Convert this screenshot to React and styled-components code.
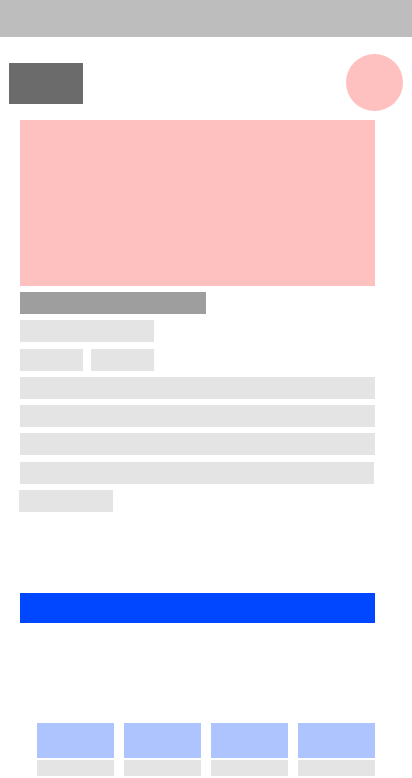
import styled, { createGlobalStyle } from "styled-components";

const GlobalStyle = createGlobalStyle`
  body {
    margin: 0;
    background: #fff;
    font-family: "Liberation Sans", Arial, sans-serif;
  }
`;

const Page = styled.div`
  width: 412px;
  height: 778px;
  overflow: hidden;
  background: #fff;
`;

const TopBar = styled.header`
  height: 37px;
  background: #bdbdbd;
`;

const Masthead = styled.div`
  display: flex;
  align-items: center;
  justify-content: space-between;
  padding: 17px 9px 0 9px;
`;

const Logo = styled.div`
  width: 74px;
  height: 41px;
  margin-top: 2px;
  background: #6b6b6b;
`;

const Avatar = styled.div`
  width: 57px;
  height: 57px;
  border-radius: 50%;
  background: #ffc0c0;
`;

const Content = styled.main`
  display: flex;
  flex-direction: column;
  padding: 9px 37px 0 20px;
`;

const Hero = styled.div`
  height: 166px;
  background: #ffc0c0;
  margin-bottom: 6px;
`;

const Lines = styled.div`
  display: flex;
  flex-direction: column;
  gap: 6.3px;
`;

const Line = styled.div`
  height: 22px;
  width: ${(p) => p.$w || "100%"};
  background: ${(p) => (p.$dark ? "#9e9e9e" : "#e4e4e4")};
  margin-left: ${(p) => p.$shift || 0};
`;

const ChipRow = styled.div`
  display: flex;
  gap: 8px;
`;

const Button = styled.div`
  height: 30px;
  margin-top: 81px;
  background: #0047ff;
`;

const Cards = styled.div`
  display: grid;
  grid-template-columns: repeat(4, 77px);
  gap: 10px;
  margin-top: 100px;
  padding-left: 17px;
`;

const Card = styled.div`
  display: flex;
  flex-direction: column;
  gap: 2px;
`;

const Thumb = styled.div`
  height: 35px;
  background: #aec4fe;
`;

const Caption = styled.div`
  height: 16px;
  background: #e4e4e4;
`;

export default function App() {
  return (
    <Page>
      <GlobalStyle />
      <TopBar />
      <Masthead>
        <Logo />
        <Avatar />
      </Masthead>
      <Content>
        <Hero />
        <Lines>
          <Line $dark $w="186px" />
          <Line $w="134px" />
          <ChipRow>
            <Line $w="63px" />
            <Line $w="63px" />
          </ChipRow>
          <Line />
          <Line />
          <Line />
          <Line $w="354px" />
          <Line $w="94px" $shift="-1px" />
        </Lines>
        <Button />
        <Cards>
          {[0, 1, 2, 3].map((i) => (
            <Card key={i}>
              <Thumb />
              <Caption />
            </Card>
          ))}
        </Cards>
      </Content>
    </Page>
  );
}
